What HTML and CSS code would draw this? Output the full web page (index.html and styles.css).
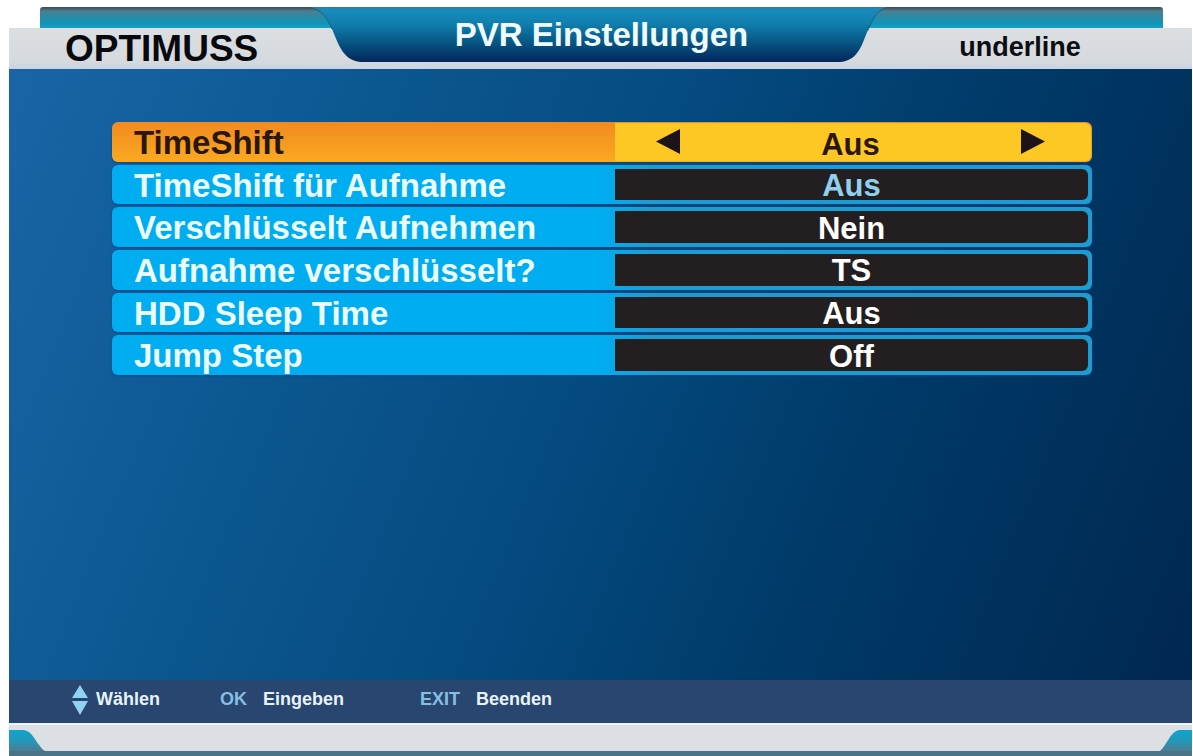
FILE: index.html
```html
<!DOCTYPE html>
<html lang="de">
<head>
<meta charset="utf-8">
<title>PVR Einstellungen</title>
<link rel="stylesheet" href="styles.css">
</head>
<body>
<div class="screen">
  <header class="header">
    <div class="brand">OPTIMUSS</div>
    <div class="banner">
      <svg class="banner-shape" viewBox="0 0 580 55" preserveAspectRatio="none" aria-hidden="true">
        <defs>
          <linearGradient id="bannerFill" x1="0" y1="0" x2="0" y2="1">
            <stop offset="0" stop-color="#3f7891"/>
            <stop offset="0.05" stop-color="#168bbc"/>
            <stop offset="0.3" stop-color="#107fae"/>
            <stop offset="0.65" stop-color="#075583"/>
            <stop offset="1" stop-color="#02265a"/>
          </linearGradient>
        </defs>
        <path fill="url(#bannerFill)" d="M0 0C14 2 19 11 24 22C31 38 35 54 54 55H532C550 54 554 39 560 24C565 13 568 4 580 0Z"/>
        <path fill="none" stroke="#1f5f7d" d="M0 0C14 2 19 11 24 22M560 24C565 13 568 4 580 0"/>
      </svg>
      <h1 class="title">PVR Einstellungen</h1>
    </div>
    <div class="mode">underline</div>
  </header>

  <main class="content">
    <ul class="settings">
      <li class="row row-active">
        <span class="label" id="l1">TimeShift</span>
        <div class="value" role="group" aria-labelledby="l1">
          <button class="arrow" type="button" aria-label="Zurück"><svg viewBox="0 0 24 25" aria-hidden="true"><path d="M0 12.5L24 0V25Z"/></svg></button>
          <output class="current">Aus</output>
          <button class="arrow" type="button" aria-label="Weiter"><svg viewBox="0 0 24 25" aria-hidden="true"><path d="M24 12.5L0 0V25Z"/></svg></button>
        </div>
      </li>
      <li class="row"><span class="label" id="l2">TimeShift für Aufnahme</span><button class="value value-muted" type="button" aria-describedby="l2">Aus</button></li>
      <li class="row"><span class="label" id="l3">Verschlüsselt Aufnehmen</span><button class="value" type="button" aria-describedby="l3">Nein</button></li>
      <li class="row"><span class="label" id="l4">Aufnahme verschlüsselt?</span><button class="value" type="button" aria-describedby="l4">TS</button></li>
      <li class="row"><span class="label" id="l5">HDD Sleep Time</span><button class="value" type="button" aria-describedby="l5">Aus</button></li>
      <li class="row"><span class="label" id="l6">Jump Step</span><button class="value" type="button" aria-describedby="l6">Off</button></li>
    </ul>
  </main>

  <footer class="hints">
    <span class="hint"><svg class="updown" viewBox="0 0 16 30" aria-hidden="true"><path d="M8 0L16 13H0ZM0 16H16L8 30Z"/></svg>Wählen</span>
    <span class="hint"><span class="key">OK</span>Eingeben</span>
    <span class="hint"><span class="key">EXIT</span>Beenden</span>
  </footer>
  <div class="base">
    <svg class="corner" viewBox="0 0 36 21" aria-hidden="true">
      <defs>
        <linearGradient id="cornerFill" x1="0" y1="0" x2="0" y2="1">
          <stop offset="0" stop-color="#0ea5cb"/>
          <stop offset="0.5" stop-color="#2199bb"/>
          <stop offset="1" stop-color="#4b7d92"/>
        </linearGradient>
      </defs>
      <path fill="url(#cornerFill)" d="M0 0H14C24 0 28 16 36 21H0Z"/>
    </svg>
    <svg class="corner" viewBox="0 0 36 21" aria-hidden="true"><path fill="url(#cornerFill)" d="M36 0H24C15 0 11 15 4 21H36Z"/></svg>
  </div>
</div>
</body>
</html>
```
FILE: styles.css
```css
* {
  box-sizing: border-box;
}

body {
  margin: 0;
  background: #fff;
  font-family: "Liberation Sans", Arial, sans-serif;
  font-weight: 700;
}

.screen {
  display: flex;
  flex-direction: column;
  min-height: 100vh;
  padding: 7px 1px 0 9px;
}

.header {
  position: relative;
  display: grid;
  grid-template-columns: 299fr 580fr 305fr;
  height: 62px;
  background: linear-gradient(#dcdfe2, #d6d9dd 34px, #c8d3e2) 0 21px / 100% 41px no-repeat;
}

.header::before {
  content: "";
  position: absolute;
  top: 0;
  left: 31px;
  right: 29px;
  height: 21px;
  border-radius: 3px 3px 0 0;
  background: linear-gradient(#43464f, #4a7f92 4px, #0f94b8 16px, #14a0c4);
}

.brand {
  padding: 21px 0 0 56px;
  font-size: 37px;
  line-height: 41px;
  color: #08090c;
}

.banner {
  position: relative;
  height: 55px;
}

.banner-shape {
  position: absolute;
  inset: 0;
  width: 100%;
  height: 100%;
}

.title {
  position: relative;
  margin: 0;
  padding-left: 8px;
  font-size: 33px;
  line-height: 56px;
  text-align: center;
  color: #f0fbff;
}

.mode {
  padding: 21px 0 0 72px;
  font-size: 27px;
  line-height: 38px;
  color: #0c0d10;
}

.content {
  flex: 1;
  padding: 53px 100px 53px 103px;
  background: linear-gradient(112deg, #1965a6, #0c568f 28%, #044a7e 50%, #003a69 70%, #002850);
}

.settings {
  display: grid;
  grid-auto-rows: 1fr;
  gap: 3px;
  min-height: 253px;
  margin: 0;
  padding: 0;
  list-style: none;
}

.row {
  display: grid;
  grid-template-columns: 503fr 477fr;
  border-radius: 6px;
  background: linear-gradient(90deg, #00adf0 50%, #209bd2 55%);
  box-shadow: 0 1px 2px #05488a;
  color: #ecfcff;
  font-size: 33px;
}

.label {
  padding: 3px 0 0 22px;
  line-height: 36px;
}

.value {
  margin: 4px 4px 4px 0;
  padding: 3px 0 0;
  border: 0;
  border-radius: 0 6px 6px 0;
  background: #231f20;
  color: #fff;
  font: inherit;
  font-size: 31px;
  line-height: 28px;
  text-align: center;
}

.value-muted {
  color: #90cfee;
}

.row-active {
  background: linear-gradient(#f28a20, #f59a20 50%, #fba922);
  color: #2b1709;
}

.row-active .value {
  display: flex;
  align-items: center;
  justify-content: space-between;
  margin: 1px 1px 1px 0;
  padding: 0 46px 0 41px;
  background: #fdc823;
  color: #2b1709;
}

.current {
  padding-top: 6px;
}

.arrow {
  display: flex;
  padding: 0;
  border: 0;
  background: none;
}

.arrow svg {
  width: 24px;
  height: 25px;
  fill: #1c1418;
}

.hints {
  display: flex;
  align-items: center;
  gap: 60px;
  height: 43px;
  padding: 0 0 4px 63px;
  background: #28466f;
  color: #e6f3fa;
  font-size: 18px;
}

.hint {
  display: flex;
  align-items: center;
  gap: 8px;
}

.hint + .hint {
  gap: 16px;
}

.hint:last-child {
  margin-left: 16px;
}

.updown {
  width: 16px;
  height: 30px;
  fill: #8fd3f4;
}

.key {
  color: #85bfe2;
}

.base {
  display: flex;
  align-items: flex-end;
  justify-content: space-between;
  height: 33px;
  border-top: 2px solid #eaf4fb;
  border-bottom: 5px solid #4b7386;
  background: #dcdfe3;
}

.corner {
  width: 36px;
  height: 21px;
}
```
